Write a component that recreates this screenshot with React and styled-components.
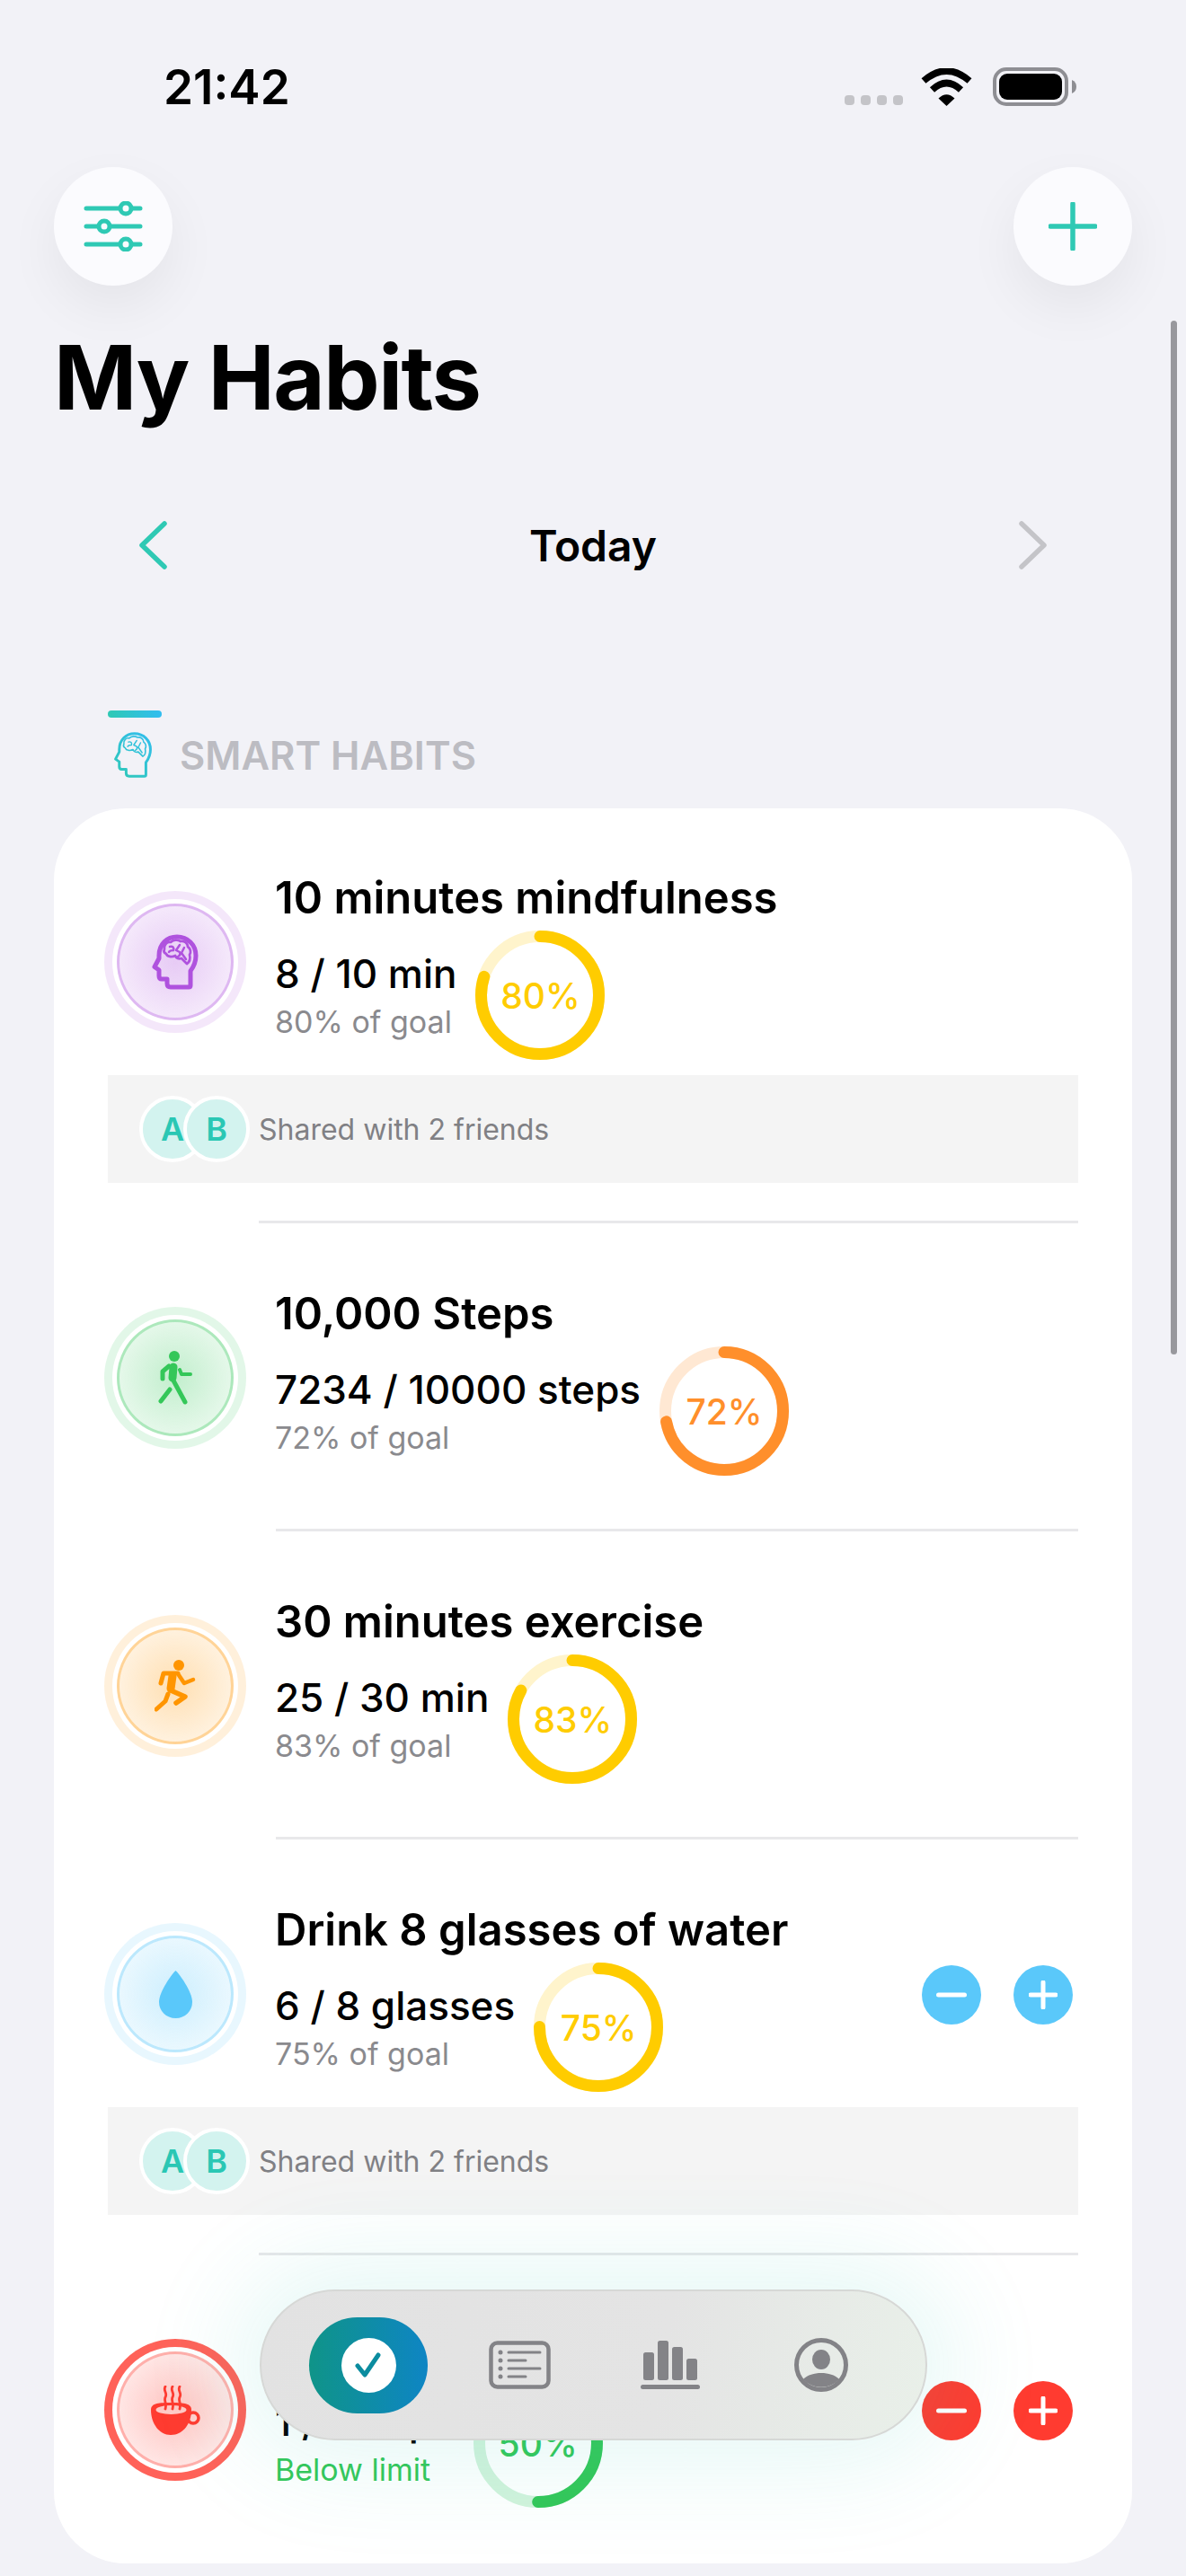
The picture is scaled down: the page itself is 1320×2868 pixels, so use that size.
import styled, { createGlobalStyle } from 'styled-components';

const GlobalStyle = createGlobalStyle`
  html, body {
    margin: 0;
    padding: 0;
    background: #f2f2f7;
  }
  * {
    box-sizing: border-box;
  }
`;

const TEAL = '#2fc9b4';
const GREY = '#838387';

const habits = [
  {
    title: '10 minutes mindfulness',
    value: '8 / 10 min',
    note: '80% of goal',
    percent: 80,
    ring: '#ffcc00',
    track: '#fff4cc',
    tint: '175,82,222',
    icon: 'brain',
    shared: true,
  },
  {
    title: '10,000 Steps',
    value: '7234 / 10000 steps',
    note: '72% of goal',
    percent: 72,
    ring: '#ff8f2b',
    track: '#ffe8d3',
    tint: '52,199,89',
    icon: 'walk',
  },
  {
    title: '30 minutes exercise',
    value: '25 / 30 min',
    note: '83% of goal',
    percent: 83,
    ring: '#ffcc00',
    track: '#fff4cc',
    tint: '255,149,0',
    icon: 'run',
  },
  {
    title: 'Drink 8 glasses of water',
    value: '6 / 8 glasses',
    note: '75% of goal',
    percent: 75,
    ring: '#ffcc00',
    track: '#fff4cc',
    tint: '90,200,250',
    icon: 'drop',
    shared: true,
    stepper: '#5ac8fa',
  },
  {
    title: 'Limit coffee to 2 cups',
    value: '1 / 2 cups',
    note: 'Below limit',
    noteColor: '#34c759',
    percent: 50,
    ring: '#34c759',
    track: '#d2f3dc',
    tint: '255,59,48',
    icon: 'coffee',
    alert: true,
    stepper: '#ff3b30',
  },
];

function HeadIcon({ stroke, width, height, line, gradientId }) {
  return (
    <svg width={width} height={height} viewBox="0 0 52 62" fill="none" stroke={stroke} strokeLinecap="round" strokeLinejoin="round">
      {gradientId && (
        <defs>
          <linearGradient id={gradientId} x1="0" y1="62" x2="52" y2="0" gradientUnits="userSpaceOnUse">
            <stop offset="0" stopColor="#2fc9b4" />
            <stop offset="1" stopColor="#32bdf0" />
          </linearGradient>
        </defs>
      )}
      <path strokeWidth={line} d="M41 59 H21 Q17 59 17 55 V50 H11 Q8 50 8 46.500 V40 L3 36.500 L8 27 V24 C8 11 17 3 28 3 C40 3 49 12 49 24 C49 32 46 37 43 41 V57 Q43 59 41 59 Z" />
      <path strokeWidth={line * 0.55} d="M14 17 C13 12 17 8 21 9 C24 6 29 6 32 8 C36 7 40 10 40 14 C43 16 44 20 42 23 C43 27 42 31 39 33 L33 27 C30 28 27 27 26 24 C22 26 17 25 16 22 C14 21 13 19 14 17 Z" />
      <path strokeWidth={line * 0.5} d="M20 14 C23 13 25 15 24 18 C22 18 20 18 19 20 M31 12 L27 18 L31 20 C32 22 31 24 29 25 M36 15 L33 21 L38 28" />
    </svg>
  );
}

function WalkIcon() {
  return (
    <svg width="38" height="60" viewBox="0 0 38 60" fill="none" stroke="#34c759" strokeLinecap="round" strokeLinejoin="round">
      <circle cx="18" cy="6" r="6" fill="#34c759" stroke="none" />
      <path strokeWidth="9" d="M17 18 L16 30" />
      <path strokeWidth="5" d="M12 17 L5 23 V31" />
      <path strokeWidth="4" d="M24 21 L26 26 H36" />
      <path strokeWidth="5" d="M17 33 L30 57" />
      <path strokeWidth="5" d="M13 43 L3 56" />
    </svg>
  );
}

function RunIcon() {
  return (
    <svg width="46" height="58" viewBox="0 0 46 58" fill="none" stroke="#ff9500" strokeLinecap="round" strokeLinejoin="round">
      <circle cx="27" cy="6" r="6" fill="#ff9500" stroke="none" />
      <path strokeWidth="9" d="M20 18 L18 32" />
      <path strokeWidth="5" d="M26 15 H10 L7 26" />
      <path strokeWidth="4.500" d="M27 17 L33 26 L43 22" />
      <path strokeWidth="5.500" d="M18 34 L34 41 L24 48" />
      <path strokeWidth="5" d="M15 38 L12 46 L2 55" />
    </svg>
  );
}

function DropIcon() {
  return (
    <svg width="37" height="53" viewBox="0 0 37 53">
      <path fill="#5ac8fa" d="M18.500 0 C22 3 37 23 37 35 C37 45 29 53 18.500 53 C8 53 0 45 0 35 C0 23 15 3 18.500 0 Z" />
    </svg>
  );
}

function CoffeeIcon() {
  return (
    <svg width="55" height="55" viewBox="0 0 55 55" fill="none">
      <path fill="#ff3b30" d="M0 27 C0 19 10 19 22 19 C34 19 45 19 45 27 C45 42 36 55 22 55 C9 55 0 42 0 27 Z" />
      <ellipse cx="22.500" cy="27" rx="17" ry="5" fill="#ffc9c5" />
      <circle cx="47" cy="36" r="6" stroke="#ff3b30" strokeWidth="3.500" />
      <path stroke="#ff3b30" strokeWidth="2.800" strokeLinecap="round" d="M16 1 c-3 5 3 7 0 12 c-2 4 2 6 0 13 M24 1 c-3 5 3 7 0 12 c-2 4 2 6 0 13 M32 1 c-3 5 3 7 0 12 c-2 4 2 6 0 13" />
    </svg>
  );
}

const habitIcons = {
  brain: <HeadIcon stroke="#af52de" width={52} height={62} line={5} />,
  walk: <WalkIcon />,
  run: <RunIcon />,
  drop: <DropIcon />,
  coffee: <CoffeeIcon />,
};

function ProgressRing({ percent, color, track }) {
  const radius = 65.5;
  const length = 2 * Math.PI * radius;
  return (
    <RingBox>
      <RingSvg width="144" height="144" viewBox="0 0 144 144" fill="none">
        <circle cx="72" cy="72" r={radius} stroke={track} strokeWidth="13" />
        <circle
          cx="72"
          cy="72"
          r={radius}
          stroke={color}
          strokeWidth="13"
          strokeLinecap="round"
          strokeDasharray={`${(length * percent) / 100} ${length}`}
          transform="rotate(-90 72 72)"
        />
      </RingSvg>
      <RingLabel $color={color}>{percent}%</RingLabel>
    </RingBox>
  );
}

function HabitRow({ habit }) {
  return (
    <Row>
      <BadgeOuter $tint={habit.tint} $alert={habit.alert}>
        <BadgeGap>
          <BadgeInner $tint={habit.tint}>{habitIcons[habit.icon]}</BadgeInner>
        </BadgeGap>
      </BadgeOuter>
      <RowBody>
        <HabitTitle>{habit.title}</HabitTitle>
        <RowStats>
          <StatText>
            <StatValue>{habit.value}</StatValue>
            <StatNote $color={habit.noteColor}>{habit.note}</StatNote>
          </StatText>
          <ProgressRing percent={habit.percent} color={habit.ring} track={habit.track} />
        </RowStats>
      </RowBody>
      {habit.stepper && (
        <Stepper>
          <StepButton $color={habit.stepper}>
            <svg width="34" height="6" viewBox="0 0 34 6">
              <rect width="34" height="5" y="0.5" rx="2.500" fill="#fff" />
            </svg>
          </StepButton>
          <StepButton $color={habit.stepper}>
            <svg width="32" height="32" viewBox="0 0 32 32">
              <path d="M16 2 V30 M2 16 H30" stroke="#fff" strokeWidth="5" strokeLinecap="round" />
            </svg>
          </StepButton>
        </Stepper>
      )}
    </Row>
  );
}

export default function App() {
  return (
    <Page>
      <GlobalStyle />
      <StatusBar>
        <Clock>21:42</Clock>
        <StatusIcons>
          <SignalDots>
            <SignalDot />
            <SignalDot />
            <SignalDot />
            <SignalDot />
          </SignalDots>
          <svg width="57" height="42" viewBox="0 0 57 42" fill="none" stroke="#000">
            <path strokeWidth="7.500" d="M3 14 Q28.500 -8 54 14" />
            <path strokeWidth="7.500" d="M12.500 24 Q28.500 9 44.500 24" />
            <path fill="#000" stroke="none" d="M28.500 42 L19.500 33.500 Q28.500 25 37.500 33.500 Z" />
          </svg>
          <svg width="93" height="43" viewBox="0 0 93 43">
            <rect x="2" y="2" width="80" height="39" rx="13" fill="none" stroke="#8e8e93" strokeWidth="4" />
            <rect x="7" y="7" width="70" height="29" rx="9" fill="#000" />
            <path d="M88 14 Q93 16 93 21.500 Q93 27 88 29 Z" fill="#8e8e93" />
          </svg>
        </StatusIcons>
      </StatusBar>

      <TopActions>
        <RoundButton>
          <svg width="66" height="56" viewBox="0 0 66 56" fill="none" stroke={TEAL}>
            <path strokeWidth="5" strokeLinecap="round" d="M3 8 H63 M3 28 H63 M3 48 H63" />
            <circle cx="47" cy="8" r="6" fill="#fbfbfe" strokeWidth="5" />
            <circle cx="23" cy="28" r="6" fill="#fbfbfe" strokeWidth="5" />
            <circle cx="47" cy="48" r="6" fill="#fbfbfe" strokeWidth="5" />
          </svg>
        </RoundButton>
        <RoundButton>
          <svg width="54" height="54" viewBox="0 0 54 54" fill="none" stroke={TEAL} strokeLinecap="round">
            <path strokeWidth="5.500" d="M27 2 V52 M2 27 H52" />
          </svg>
        </RoundButton>
      </TopActions>

      <PageTitle>My Habits</PageTitle>

      <DayNav>
        <svg width="32" height="54" viewBox="0 0 32 54" fill="none" stroke={TEAL} strokeWidth="5.500" strokeLinecap="round" strokeLinejoin="round">
          <path d="M29 3 L4 27 L29 51" />
        </svg>
        <DayLabel>Today</DayLabel>
        <svg width="32" height="54" viewBox="0 0 32 54" fill="none" stroke="#c4c4c8" strokeWidth="5.500" strokeLinecap="round" strokeLinejoin="round">
          <path d="M3 3 L28 27 L3 51" />
        </svg>
      </DayNav>

      <SectionHead>
        <SectionBar />
        <SectionRow>
          <HeadIcon stroke="url(#sectionHead)" width={44} height={53} line={3.5} gradientId="sectionHead" />
          <SectionTitle>SMART HABITS</SectionTitle>
        </SectionRow>
      </SectionHead>

      <Card>
        {habits.map((habit, index) => (
          <div key={habit.title}>
            <HabitRow habit={habit} />
            {habit.shared && (
              <SharedBar>
                <Avatar>A</Avatar>
                <Avatar $stacked>B</Avatar>
                <SharedText>Shared with 2 friends</SharedText>
              </SharedBar>
            )}
            {index < habits.length - 1 && <Divider $wide={habit.shared} />}
          </div>
        ))}
      </Card>

      <TabBar>
        <TabCell>
          <ActiveTab>
            <ActiveDot>
              <svg width="30" height="28" viewBox="0 0 30 28" fill="none" stroke="#0b8c9f" strokeWidth="5" strokeLinecap="round" strokeLinejoin="round">
                <path d="M3 15 L11 25 L26 3" />
              </svg>
            </ActiveDot>
          </ActiveTab>
        </TabCell>
        <TabCell>
          <svg width="69" height="54" viewBox="0 0 69 54" fill="none" stroke={GREY}>
            <rect x="2.500" y="2.500" width="64" height="49" rx="7" strokeWidth="4.500" />
            <path strokeWidth="3" strokeLinecap="round" d="M22 13 H57 M22 22 H41 M22 31 H57 M22 40 H41" />
            <g fill={GREY} stroke="none">
              <circle cx="13" cy="13" r="2.500" />
              <circle cx="13" cy="22" r="2.500" />
              <circle cx="13" cy="31" r="2.500" />
              <circle cx="13" cy="40" r="2.500" />
            </g>
          </svg>
        </TabCell>
        <TabCell>
          <svg width="66" height="54" viewBox="0 0 66 54" fill={GREY}>
            <rect x="3" y="13" width="12" height="31" rx="2.500" />
            <rect x="19" y="0" width="12" height="44" rx="2.500" />
            <rect x="35" y="7" width="12" height="37" rx="2.500" />
            <rect x="51" y="20" width="12" height="24" rx="2.500" />
            <rect x="0" y="49" width="66" height="5" rx="2.500" />
          </svg>
        </TabCell>
        <TabCell>
          <svg width="60" height="60" viewBox="0 0 60 60" fill={GREY}>
            <circle cx="30" cy="30" r="27.500" fill="none" stroke={GREY} strokeWidth="5" />
            <ellipse cx="30" cy="24" rx="10" ry="11" />
            <path d="M10 46 C15 41 22 39 30 39 C38 39 45 41 50 46 A27 27 0 0 1 10 46 Z" />
          </svg>
        </TabCell>
      </TabBar>

      <ScrollThumb />
    </Page>
  );
}

const Page = styled.div`
  position: relative;
  width: 1320px;
  height: 2868px;
  overflow: hidden;
  background: #f2f2f7;
  font-family: Inter, 'Liberation Sans', sans-serif;
  color: #000;
`;

const StatusBar = styled.div`
  height: 186px;
  padding: 75px 122px 0 182px;
  display: flex;
  justify-content: space-between;
  align-items: flex-start;
`;

const Clock = styled.div`
  font-size: 53px;
  line-height: 44px;
  font-weight: 600;
`;

const StatusIcons = styled.div`
  display: flex;
  align-items: flex-end;
  gap: 23px;
`;

const SignalDots = styled.div`
  display: flex;
  gap: 7px;
  margin-bottom: 1px;
  margin-right: -3px;
`;

const SignalDot = styled.span`
  width: 11px;
  height: 11px;
  border-radius: 4px;
  background: #c4c4c8;
`;

const TopActions = styled.div`
  display: flex;
  justify-content: space-between;
  padding: 0 60px;
`;

const RoundButton = styled.div`
  width: 132px;
  height: 132px;
  border-radius: 50%;
  background: #fbfbfe;
  display: flex;
  align-items: center;
  justify-content: center;
  box-shadow: 0 24px 60px rgba(0, 0, 0, 0.06);
`;

const PageTitle = styled.h1`
  margin: 42px 0 0 60px;
  font-size: 99px;
  line-height: 120px;
  font-weight: 700;
  letter-spacing: -1.5px;
`;

const DayNav = styled.div`
  margin-top: 97px;
  height: 60px;
  padding: 0 154px;
  display: flex;
  align-items: center;
  justify-content: space-between;
`;

const DayLabel = styled.div`
  font-size: 48px;
  font-weight: 600;
`;

const SectionHead = styled.div`
  margin: 154px 0 33px 120px;
`;

const SectionBar = styled.div`
  width: 60px;
  height: 8px;
  border-radius: 4px;
  background: linear-gradient(90deg, #2fc9b4, #32bdf0);
`;

const SectionRow = styled.div`
  margin: 15px 0 0 6px;
  height: 53px;
  display: flex;
  align-items: center;
  gap: 30px;
`;

const SectionTitle = styled.div`
  font-size: 43.5px;
  font-weight: 600;
  color: #bcbcc2;
`;

const Card = styled.div`
  margin: 0 60px;
  height: 1954px;
  padding: 70px 60px 0;
  border-radius: 80px;
  background: #fff;
`;

const Row = styled.div`
  display: flex;
  align-items: flex-start;
  min-height: 210px;
`;

const BadgeOuter = styled.div`
  flex: none;
  width: 158px;
  height: 158px;
  margin: 22px 32px 0 -4px;
  padding: 9px;
  border-radius: 50%;
  background: rgba(${(p) => p.$tint}, ${(p) => (p.$alert ? 0.8 : 0.14)});
`;

const BadgeGap = styled.div`
  width: 100%;
  height: 100%;
  padding: 5px;
  border-radius: 50%;
  background: #fff;
`;

const BadgeInner = styled.div`
  width: 100%;
  height: 100%;
  border-radius: 50%;
  border: 3px solid rgba(${(p) => p.$tint}, 0.32);
  background: radial-gradient(circle, rgba(${(p) => p.$tint}, 0.3) 0%, rgba(${(p) => p.$tint}, 0.06) 100%);
  display: flex;
  align-items: center;
  justify-content: center;
`;

const RowBody = styled.div`
  flex: 1;
  min-width: 0;
`;

const HabitTitle = styled.div`
  height: 60px;
  font-size: 49px;
  line-height: 60px;
  font-weight: 600;
  white-space: nowrap;
`;

const RowStats = styled.div`
  margin-top: 6px;
  display: flex;
  gap: 21px;
`;

const StatText = styled.div`
  padding-top: 20px;
`;

const StatValue = styled.div`
  font-size: 44px;
  line-height: 56px;
  font-weight: 500;
  white-space: nowrap;
`;

const StatNote = styled.div`
  font-size: 34px;
  line-height: 52px;
  color: ${(p) => p.$color || '#8a8a8e'};
  white-space: nowrap;
`;

const RingBox = styled.div`
  flex: none;
  width: 144px;
  height: 144px;
  display: grid;
  place-items: center;
`;

const RingSvg = styled.svg`
  grid-area: 1 / 1;
`;

const RingLabel = styled.div`
  grid-area: 1 / 1;
  font-size: 39px;
  font-weight: 500;
  color: ${(p) => p.$color};
`;

const Stepper = styled.div`
  flex: none;
  margin: 69px 6px 0 0;
  display: flex;
  gap: 36px;
`;

const StepButton = styled.div`
  width: 66px;
  height: 66px;
  border-radius: 50%;
  background: ${(p) => p.$color};
  display: flex;
  align-items: center;
  justify-content: center;
`;

const SharedBar = styled.div`
  margin-top: 17px;
  height: 120px;
  padding-left: 35px;
  background: #f4f4f4;
  display: flex;
  align-items: center;
`;

const Avatar = styled.div`
  width: 74px;
  height: 74px;
  margin-left: ${(p) => (p.$stacked ? '-25px' : '0')};
  border-radius: 50%;
  border: 4px solid #fff;
  background: #d3f3ef;
  color: #2ac7b4;
  font-size: 36px;
  font-weight: 600;
  display: flex;
  align-items: center;
  justify-content: center;
`;

const SharedText = styled.div`
  margin-left: 10px;
  font-size: 32px;
  color: #808084;
`;

const Divider = styled.div`
  height: 3px;
  margin: ${(p) => (p.$wide ? '42px 0 71px 168px' : '59px 0 71px 187px')};
  background: #e8e8ea;
`;

const TabBar = styled.div`
  position: absolute;
  left: 289px;
  top: 2549px;
  width: 743px;
  height: 168px;
  padding-left: 35px;
  display: flex;
  align-items: center;
  border-radius: 84px;
  border: 2px solid #d6d8d6;
  background: linear-gradient(100deg, #e2e2e2 0%, #e4e4e4 60%, #e9f0e9 100%);
  box-shadow: 0 0 110px 30px rgba(47, 201, 180, 0.12);
`;

const TabCell = styled.div`
  width: 168px;
  display: flex;
  justify-content: center;
`;

const ActiveTab = styled.div`
  width: 132px;
  height: 107px;
  border-radius: 54px;
  background: linear-gradient(90deg, #0f9488, #0e85c4);
  display: flex;
  align-items: center;
  justify-content: center;
`;

const ActiveDot = styled.div`
  width: 61px;
  height: 61px;
  border-radius: 50%;
  background: #fff;
  display: flex;
  align-items: center;
  justify-content: center;
`;

const ScrollThumb = styled.div`
  position: absolute;
  top: 357px;
  right: 10px;
  width: 7px;
  height: 1151px;
  border-radius: 4px;
  background: #98989d;
`;
